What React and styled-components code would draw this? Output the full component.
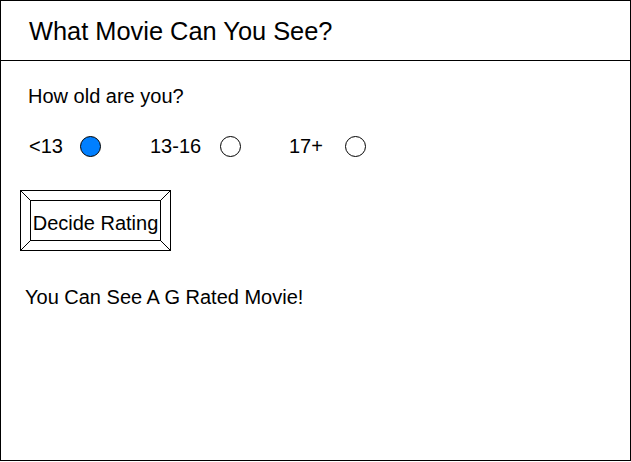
import React, { useState } from 'react';
import styled, { createGlobalStyle } from 'styled-components';

const GlobalStyle = createGlobalStyle`
  body {
    margin: 0;
    background: #fff;
    font-family: "Liberation Sans", Arial, sans-serif;
    color: #000;
  }
`;

const Frame = styled.div`
  box-sizing: border-box;
  width: 631px;
  height: 461px;
  border: 1px solid #000;
  display: flex;
  flex-direction: column;
`;

const Header = styled.header`
  box-sizing: border-box;
  height: 60px;
  border-bottom: 1px solid #000;
  display: flex;
  align-items: center;
  padding-left: 28px;
  padding-top: 2px;
`;

const Title = styled.h1`
  margin: 0;
  font-size: 25.4px;
  font-weight: normal;
`;

const Body = styled.main`
  display: flex;
  flex-direction: column;
  align-items: flex-start;
  padding: 23px 0 0 0;
`;

const Question = styled.div`
  font-size: 20px;
  line-height: 24px;
  margin-left: 27px;
`;

const OptionRow = styled.div`
  display: flex;
  align-items: center;
  margin-top: 26px;
  margin-left: 28px;
  height: 24px;
`;

const Option = styled.label`
  display: flex;
  align-items: center;
  width: ${p => p.$width}px;
  font-size: 20px;
  cursor: pointer;
`;

const OptionText = styled.span`
  width: ${p => p.$gap}px;
`;

const Radio = styled.span`
  box-sizing: border-box;
  width: 21px;
  height: 21px;
  border-radius: 50%;
  border: 1px solid #000;
  background: ${p => (p.$checked ? '#007fff' : '#fff')};
`;

const Bevel = styled.button`
  position: relative;
  box-sizing: border-box;
  margin-top: 32px;
  margin-left: 19px;
  width: 151px;
  height: 61px;
  padding: 9px;
  border: 1px solid #000;
  background: #fff;
  font-family: inherit;
  cursor: pointer;
`;

const BevelFace = styled.span`
  box-sizing: border-box;
  display: flex;
  align-items: center;
  justify-content: center;
  width: 100%;
  height: 100%;
  padding-top: 5px;
  border: 1px solid #000;
  font-size: 20px;
  color: #000;
  white-space: nowrap;
`;

const Corners = styled.svg`
  position: absolute;
  left: -1px;
  top: -1px;
  pointer-events: none;
`;

const Result = styled.div`
  font-size: 20px;
  line-height: 24px;
  margin-top: 34px;
  margin-left: 24px;
`;

const options = [
  { label: '<13', width: 121, gap: 51, rating: 'G' },
  { label: '13-16', width: 139, gap: 70, rating: 'PG-13' },
  { label: '17+', width: 100, gap: 56, rating: 'R' },
];

export default function App() {
  const [selected, setSelected] = useState(0);
  const [rating, setRating] = useState('G');

  return (
    <>
      <GlobalStyle />
      <Frame>
        <Header>
          <Title>What Movie Can You See?</Title>
        </Header>
        <Body>
          <Question>How old are you?</Question>
          <OptionRow>
            {options.map((o, i) => (
              <Option key={o.label} $width={o.width} onClick={() => setSelected(i)}>
                <OptionText $gap={o.gap}>{o.label}</OptionText>
                <Radio $checked={selected === i} />
              </Option>
            ))}
          </OptionRow>
          <Bevel onClick={() => setRating(options[selected].rating)}>
            <BevelFace>Decide Rating</BevelFace>
            <Corners width="151" height="61" viewBox="0 0 151 61">
              <g stroke="#000" strokeWidth="1">
                <line x1="0.5" y1="0.5" x2="10.5" y2="10.5" />
                <line x1="150.5" y1="0.5" x2="140.5" y2="10.5" />
                <line x1="0.5" y1="60.5" x2="10.5" y2="50.5" />
                <line x1="150.5" y1="60.5" x2="140.5" y2="50.5" />
              </g>
            </Corners>
          </Bevel>
          <Result>You Can See A {rating} Rated Movie!</Result>
        </Body>
      </Frame>
    </>
  );
}
